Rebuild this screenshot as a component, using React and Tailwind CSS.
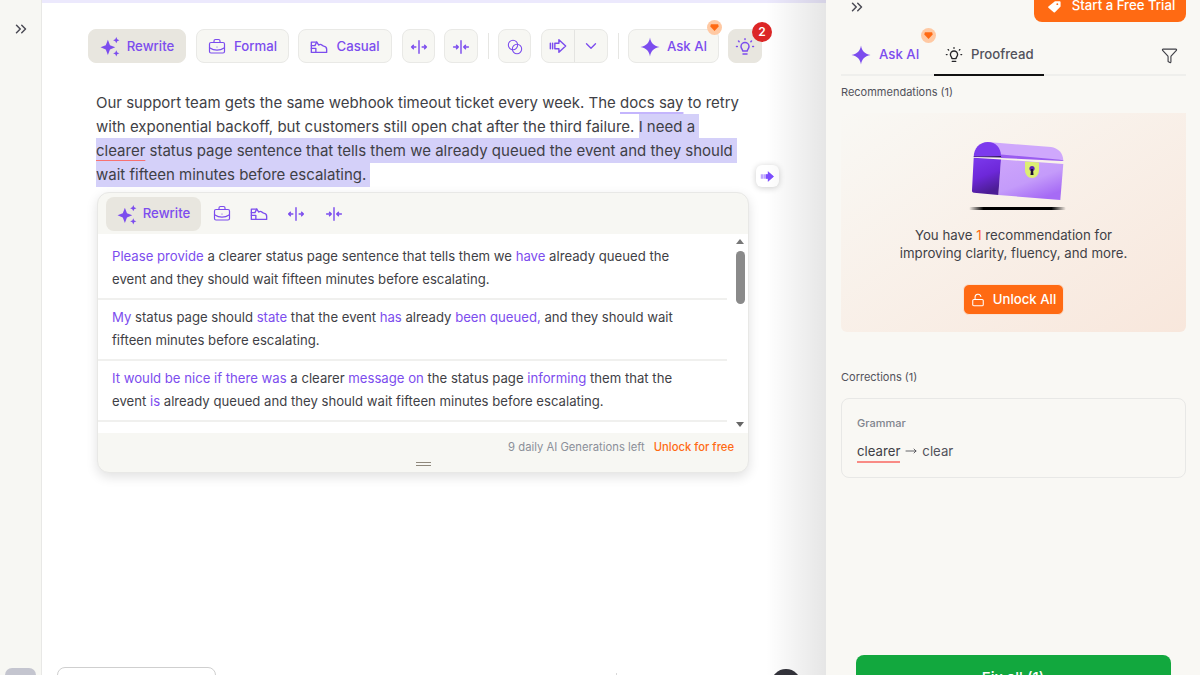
import React from "react";
import {
  BriefcaseBusiness, Blend, ChevronDown, ChevronsRight,
  Funnel, LockOpen, MoveRight
} from "lucide-react";

function Sparkle({ className }) {
  return (
    <svg viewBox="0 0 20 20" className={className} fill="currentColor">
      <path d="M7.500 3.500 9.500 8.700l5 2.100-5 2.100-2 5.300-2-5.300-5-2.100 5-2.100z" />
      <path d="M15.500 1l.9 2.100 2.100.9-2.100.9-.9 2.100-.9-2.100-2.100-.9 2.100-.9z" />
      <path d="M15.500 13.500l.9 2.100 2.100.9-2.100.9-.9 2.100-.9-2.100-2.100-.9 2.100-.9z" />
    </svg>
  );
}

function BigStar({ className }) {
  return (
    <svg viewBox="0 0 20 20" className={className} fill="currentColor">
      <path d="M10 .5c.9 5.300 3.300 8.200 9.500 9.500-6.200 1.300-8.600 4.200-9.500 9.500C9.100 14.200 6.700 11.300.5 10 6.700 8.700 9.100 5.800 10 .5z" />
    </svg>
  );
}

function Shoe({ className }) {
  return (
    <svg viewBox="0 0 20 20" className={className} fill="none" stroke="currentColor" strokeWidth="1.500" strokeLinejoin="round" strokeLinecap="round">
      <path d="M1.500 16V4.500h6l2.300 3.300c1-.8 2.500-.8 3.300 0 .6.600 1.200 1 2.100 1.200 1.800.3 3.300 1.500 3.300 3.500V16z" />
      <path d="M1.500 11.500H6.500V16M7.500 4.500 5.500 8.500M1.500 8.500h4" />
    </svg>
  );
}

function Expand({ className }) {
  return (
    <svg viewBox="0 0 20 20" className={className} fill="none" stroke="currentColor" strokeWidth="1.600" strokeLinecap="round" strokeLinejoin="round">
      <path d="M10 3v14M6.500 10H1.800M3.800 8 1.800 10l2 2M13.500 10h4.700M16.200 8l2 2-2 2" />
    </svg>
  );
}

function Contract({ className }) {
  return (
    <svg viewBox="0 0 20 20" className={className} fill="none" stroke="currentColor" strokeWidth="1.600" strokeLinecap="round" strokeLinejoin="round">
      <path d="M10 3v14M1.800 10H7M5 8l2 2-2 2M18.200 10H13M15 8l-2 2 2 2" />
    </svg>
  );
}

function Bulb({ className }) {
  return (
    <svg viewBox="0 0 20 20" className={className} fill="none" stroke="currentColor" strokeWidth="1.500" strokeLinecap="round" strokeLinejoin="round">
      <path d="M7.700 14c0-1.500-1.700-2.300-1.700-4.500a4 4 0 0 1 8 0c0 2.200-1.700 3-1.700 4.500zM8 17h4" />
      <path d="M10 1.800v.7M3.500 4l.6.6M16.500 4l-.6.6M1.500 9.500h.8M17.700 9.500h.8" />
    </svg>
  );
}

function DashArrow({ className }) {
  return (
    <svg viewBox="0 0 20 20" className={className} fill="none" stroke="currentColor" strokeWidth="1.600" strokeLinejoin="round" strokeLinecap="round">
      <path d="M6.500 7h4.500V3l7.500 7-7.500 7v-4H6.500z" />
      <path d="M1.500 7v6M4 7v6" />
    </svg>
  );
}

function FilledArrow({ className }) {
  return (
    <svg viewBox="0 0 20 20" className={className} fill="currentColor">
      <path d="M1 7h3v6H1zM4.500 7H10.500V3l8 7-8 7v-4H4.500z" opacity="0.5" />
      <path d="M8 7h2.500V3l8 7-8 7v-4H8z" />
    </svg>
  );
}

function GemBadge({ className }) {
  return (
    <span className={`flex h-[15px] w-[15px] items-center justify-center rounded-full bg-[#ffc9a3] ${className}`}>
      <svg viewBox="0 0 10 10" className="h-[9px] w-[9px]" fill="#ff6a13">
        <path d="M1 1.500h8l.7 2.300L5 9 .3 3.800z" />
      </svg>
    </span>
  );
}

function Chest() {
  return (
    <svg viewBox="0 0 100 76" className="h-[76px] w-[100px] overflow-visible">
      <defs>
        <linearGradient id="side" x1="0" y1="0" x2="0.3" y2="1">
          <stop offset="0" stopColor="#7c3aed" />
          <stop offset="0.55" stopColor="#6d28d9" />
          <stop offset="1" stopColor="#4c1d95" />
        </linearGradient>
        <linearGradient id="front" x1="0" y1="0" x2="0.6" y2="1">
          <stop offset="0" stopColor="#cda5fb" />
          <stop offset="0.6" stopColor="#c49bfa" />
          <stop offset="1" stopColor="#a66bf5" />
        </linearGradient>
        <linearGradient id="shadow" x1="0" y1="0" x2="1" y2="0">
          <stop offset="0" stopColor="#000" stopOpacity="0" />
          <stop offset="0.15" stopColor="#000" />
          <stop offset="0.85" stopColor="#000" />
          <stop offset="1" stopColor="#000" stopOpacity="0" />
        </linearGradient>
      </defs>
      {/* lid */}
      <path d="M23.700 3 87 8c7 .8 12 6 12.300 13.300L37 17z" fill="#cfa8fc" />
      <path d="M37 15.500 94 20.500l5.300.8v.7L37 19z" fill="#9a5cf0" />
      <path d="M37 20.500l62.300 4.500-3 36-62-5z" fill="url(#front)" />
      {/* end cap */}
      <path d="M9.700 18C9.700 9.500 15.500 3 23.700 3S37 9 37 17z" fill="#7c3aed" />
      <path d="M9.700 17.500 37 17l.2 1.500-27.500-.5z" fill="#2e1065" />
      <path d="M9.700 18.700 37 20.500 34.300 56 10 53.700c-1.500 0-2.200-1-2-2.500z" fill="url(#side)" />
      {/* lock */}
      <path d="M61 22.500l14 1v7.500c0 4.500-3 8-7 8s-7-3.500-7-8z" fill="#dcee73" />
      <circle cx="68" cy="29.500" r="2.600" fill="#5b21b6" />
      <path d="M67 30h2l.5 6h-3z" fill="#1e1033" />
      <rect x="5" y="68" width="97" height="3" rx="1.500" fill="url(#shadow)" />
    </svg>
  );
}

function ToolButton({ children, active, className = "" }) {
  return (
    <button className={`flex h-[34px] items-center justify-center rounded-lg border pt-px text-[#7c4dee] ${active ? "border-[#e8e6df] bg-[#e8e6df]" : "border-[#e9e9e6] bg-[#f7f7f3]"} ${className}`}>
      {children}
    </button>
  );
}

function Toolbar() {
  return (
    <div className="ml-[46px] mt-[26px] flex items-center text-[13.200px] font-medium">
      <ToolButton active className="w-[98px] gap-[6px]">
        <Sparkle className="h-[21px] w-[21px]" />
        Rewrite
      </ToolButton>
      <ToolButton className="ml-[10px] w-[93px] gap-[8px]">
        <BriefcaseBusiness className="h-[18px] w-[18px]" strokeWidth={1.600} />
        Formal
      </ToolButton>
      <ToolButton className="ml-[9px] w-[94px] gap-[8px]">
        <Shoe className="h-[18px] w-[18px]" />
        Casual
      </ToolButton>
      <ToolButton className="ml-[10px] w-[33px]">
        <Expand className="h-[18px] w-[18px]" />
      </ToolButton>
      <ToolButton className="ml-[9px] w-[34px]">
        <Contract className="h-[18px] w-[18px]" />
      </ToolButton>
      <span className="ml-[10px] mr-[9px] h-[26px] w-px bg-[#e6e6e3]" />
      <ToolButton className="w-[33px]">
        <Blend className="h-[16px] w-[16px]" strokeWidth={1.600} />
      </ToolButton>
      <div className="ml-[10px] flex h-[34px] w-[67px] items-stretch rounded-lg border border-[#e9e9e6] bg-[#f7f7f3] text-[#7c4dee]">
        <span className="flex w-[33px] items-center justify-center border-r border-[#e4e4e1]">
          <DashArrow className="h-[18px] w-[18px]" />
        </span>
        <span className="flex flex-1 items-center justify-center">
          <ChevronDown className="h-[18px] w-[18px]" strokeWidth={1.800} />
        </span>
      </div>
      <span className="ml-[10px] mr-[9px] h-[26px] w-px bg-[#e6e6e3]" />
      <div className="relative">
        <ToolButton className="w-[91px] gap-[7px]">
          <BigStar className="h-[20px] w-[20px]" />
          Ask AI
        </ToolButton>
        <GemBadge className="absolute -top-[9px] right-[-3px]" />
      </div>
      <div className="relative ml-[9px]">
        <ToolButton active className="w-[34px]">
          <Bulb className="h-[20px] w-[20px]" />
        </ToolButton>
        <span className="absolute -top-[7px] right-[-10px] flex h-[20px] w-[20px] items-center justify-center rounded-full bg-[#dc2626] text-[12px] font-semibold text-white">2</span>
      </div>
    </div>
  );
}

function Suggestion({ parts, last }) {
  return (
    <div className={`mr-[21px] pb-[7px] pl-[14px] pr-[50px] pt-[6px] text-[13.150px] leading-[23px] text-[#3f3f46] ${last ? "" : "border-b-2 border-[#f0f0ee]"}`}>
      {parts.map((p, i) =>
        p[0] === "*" ? <span key={i} className="text-[#7c4dee]">{p.slice(1)}</span> : <span key={i}>{p}</span>
      )}
    </div>
  );
}

function RewritePanel() {
  return (
    <div className="relative ml-[55px] mt-[4.500px] h-[281px] w-[652px] overflow-hidden rounded-xl border border-[#e8e8e6] bg-[#f7f7f3] shadow-[0_4px_12px_rgba(0,0,0,0.12)]">
      <div className="flex h-[41px] items-center pl-[8px] text-[#7c4dee]">
        <div className="flex h-[34px] w-[95px] items-center justify-center gap-[5px] rounded-lg bg-[#e8e6df] pt-px text-[13.200px] font-medium">
          <Sparkle className="h-[21px] w-[21px]" />
          Rewrite
        </div>
        <BriefcaseBusiness className="ml-[12px] h-[18px] w-[18px]" strokeWidth={1.600} />
        <Shoe className="ml-[19px] h-[18px] w-[18px]" />
        <Expand className="ml-[19px] h-[18px] w-[18px]" />
        <Contract className="ml-[20px] h-[18px] w-[18px]" />
      </div>

      <div className="relative h-[199px] overflow-hidden bg-white pt-[5px]">
        <Suggestion parts={["*Please provide", " a clearer status page sentence that tells them we ", "*have", " already queued the event and they should wait fifteen minutes before escalating."]} />
        <Suggestion parts={["*My", " status page should ", "*state", " that the event ", "*has", " already ", "*been queued,", " and they should wait fifteen minutes before escalating."]} />
        <Suggestion parts={["*It would be nice if there was", " a clearer ", "*message on", " the status page ", "*informing", " them that the event ", "*is", " already queued and they should wait fifteen minutes before escalating."]} />
        {/* scrollbar */}
        <div className="absolute bottom-0 right-0 top-0 flex w-[16px] flex-col items-center pt-[5px]">
          <span className="h-0 w-0 border-x-[4px] border-b-[5px] border-x-transparent border-b-[#777]" />
          <span className="mt-[7px] h-[53px] w-[9px] rounded-full bg-[#8a8a8a]" />
          <span className="mb-[6px] mt-auto h-0 w-0 border-x-[4px] border-t-[5px] border-x-transparent border-t-[#666]" />
        </div>
      </div>

      <div className="flex h-[29px] items-center justify-end gap-[9px] pr-[14px] text-[11.250px]">
        <span className="text-[#8b8f99]">9 daily AI Generations left</span>
        <span className="font-medium text-[#ff6a13]">Unlock for free</span>
      </div>
      <div className="mx-auto h-[4px] w-[15px] border-y border-[#8f887c]" />
    </div>
  );
}

function Main() {
  return (
    <main className="relative flex h-full w-[784px] flex-col bg-white">
      <div className="h-[3px] bg-[#ece9fd]" />
      <Toolbar />

      <div className="relative ml-[54px] mt-[27.500px] w-[650px] text-[15px] leading-[24.300px] text-[#3f3f46]">
        Our support team gets the same webhook timeout ticket every week. The{" "}
        <span className="underline decoration-[#c4b5fd] decoration-2 underline-offset-[4px]">docs say</span> to retry with exponential backoff, but customers still open chat after the third failure.{" "}
        <span className="bg-[#d4d0f9] py-[3px] pr-[4px] [box-decoration-break:clone]">
          I need a{" "}
          <span className="underline decoration-[#f87171] underline-offset-[4px]">clearer</span> status page sentence that tells them we already queued the event and they should wait fifteen minutes before escalating.
        </span>
      </div>

      <div className="absolute left-[714px] top-[165px] flex h-[22px] w-[23px] items-center justify-center rounded-md bg-white text-[#7c4dff] shadow-[0_1px_6px_rgba(0,0,0,0.2)]">
        <FilledArrow className="h-[15px] w-[15px]" />
      </div>

      <RewritePanel />

      <div className="mt-auto flex h-[8px] items-start overflow-hidden pl-[15px]">
        <div className="h-[40px] w-[159px] rounded-lg border border-[#cfcfcf] bg-white" />
        <div className="ml-[400px] mt-[6px] h-[10px] w-px bg-[#d8d8d8]" />
        <div className="ml-[154px] mt-[2px] h-[30px] w-[30px] rounded-full bg-[#34343c]" />
      </div>
      <div className="pointer-events-none absolute inset-y-0 right-0 w-[60px] bg-gradient-to-r from-transparent to-black/10" />
    </main>
  );
}

function Sidebar() {
  return (
    <aside className="flex h-full w-[374px] flex-col bg-[#f9f8f4]">
      <div className="flex h-[22px] items-start pl-[22px] pr-[14px]">
        <ChevronsRight className="h-[18px] w-[18px] -translate-y-[2px] text-[#4b4b55]" />
        <button className="ml-auto flex h-[22px] w-[152px] items-end justify-center gap-[10px] overflow-hidden rounded-b-lg bg-[#ff6a13] pb-[10px] pl-[2px] text-[13.200px] font-medium leading-none text-white">
          <svg viewBox="0 0 16 16" className="mb-[-2px] h-[15px] w-[15px]" fill="#fff">
            <path d="M8.500 2.500h5a1 1 0 0 1 1 1v4.500l-6 6a1 1 0 0 1-1.400 0L1.500 9.400a1 1 0 0 1 0-1.400zM11 4.500a1 1 0 1 0 0 2 1 1 0 0 0 0-2z" fillRule="evenodd" />
          </svg>
          Start a Free Trial
        </button>
      </div>

      <div className="ml-[15px] mr-[14px] mt-[22px] flex h-[32px] items-center border-b-2 border-[#efefec] text-[13.200px]">
        <div className="relative flex h-full w-[93px] items-center gap-[8px] pb-[8px] pl-[10px] font-medium text-[#7c4dee]">
          <BigStar className="h-[20px] w-[20px] shrink-0" />
          Ask AI
          <GemBadge className="absolute -top-[16px] right-[-2px]" />
        </div>
        <div className="-mb-[2px] flex h-[32px] w-[110px] items-center gap-[8px] border-b-2 border-[#111] pb-[8px] pl-[11px] font-medium text-[#52525b]">
          <Bulb className="h-[18px] w-[18px] shrink-0 text-[#27272a]" />
          Proofread
        </div>
        <Funnel className="mb-[8px] ml-auto mr-[8px] h-[17px] w-[17px] text-[#3f3f46]" strokeWidth={1.600} />
      </div>

      <div className="ml-[15px] mt-[8px] text-[11px] leading-[16px] text-[#52525b]">Recommendations (1)</div>

      <div className="ml-[15px] mr-[14px] mt-[13px] flex h-[219px] flex-col items-center rounded-b-md bg-gradient-to-br from-[#f9f8f4] to-[#f8e7dc] pt-[26px]">
        <Chest />
        <p className="mt-[11px] text-center text-[13.250px] font-normal leading-[18px] text-[#3f3f46]">
          You have <span className="text-[#ff6a13]">1</span> recommendation for<br />improving clarity, fluency, and more.
        </p>
        <button className="mt-[22px] flex h-[31px] w-[101px] items-center justify-center gap-[8px] rounded-md border border-[#fbe3d4] bg-[#ff6a13] pt-px text-[13.200px] font-medium text-white">
          <LockOpen className="h-[14px] w-[14px]" strokeWidth={1.800} />
          Unlock All
        </button>
      </div>

      <div className="ml-[15px] mt-[37px] text-[11px] leading-[16px] text-[#52525b]">Corrections (1)</div>

      <div className="ml-[15px] mr-[14px] mt-[13px] h-[80px] rounded-lg border border-[#e8e8e6] px-[15px] pt-[17px]">
        <div className="text-[11px] font-medium leading-[14px] text-[#80848e]">Grammar</div>
        <div className="mt-[11px] flex items-start text-[13.200px] leading-[20px] text-[#52525b]">
          <span className="border-b-2 border-[#f98b85] text-[#3f3f46]">clearer</span>
          <MoveRight className="mx-[5px] h-[20px] w-[12px] text-[#3f3f46]" strokeWidth={1.600} />
          clear
        </div>
      </div>

      <div className="mt-auto flex h-[20px] justify-center overflow-hidden">
        <button className="h-[40px] w-[315px] self-start rounded-lg bg-[#12a83e] pt-[5px] text-[15px] font-medium leading-[20px] text-white">
          <span className="block text-center">Fix all (1)</span>
        </button>
      </div>
    </aside>
  );
}

export default function App() {
  return (
    <div className="flex h-[675px] w-[1200px] overflow-hidden bg-white font-['Inter',sans-serif]">
      <nav className="flex h-full w-[42px] shrink-0 flex-col items-center border-r border-[#e8e8e6] bg-[#f7f7f3]">
        <ChevronsRight className="mt-[20px] h-[18px] w-[18px] text-[#4b4b55]" />
        <div className="mt-auto h-[7px] w-[31px] rounded-t-lg bg-[#c4c5cf]" />
      </nav>
      <Main />
      <Sidebar />
    </div>
  );
}
